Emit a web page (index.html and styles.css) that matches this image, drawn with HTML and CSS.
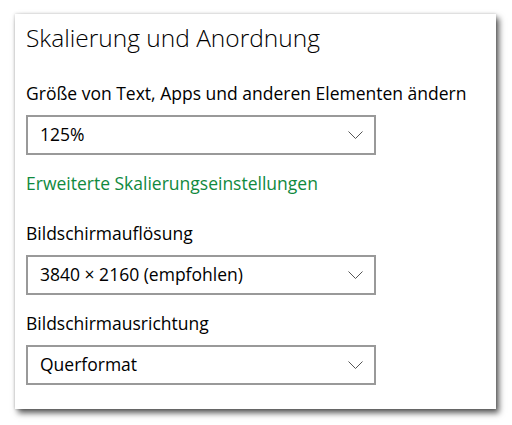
FILE: index.html
```html
<!DOCTYPE html>
<html lang="de">
<head>
<meta charset="utf-8">
<link rel="stylesheet" href="styles.css">
</head>
<body>
<div class="panel">
  <h1 class="title">Skalierung und Anordnung</h1>
  <div class="label first">Größe von Text, Apps und anderen Elementen ändern</div>
  <div class="select"><span>125%</span><svg class="chev" width="15" height="8" viewBox="0 0 15 8"><path d="M0.5 0.5 L7.5 7.5 L14.5 0.5" fill="none" stroke="#555" stroke-width="1"/></svg></div>
  <a class="link">Erweiterte Skalierungseinstellungen</a>
  <div class="label">Bildschirmauflösung</div>
  <div class="select"><span>3840 × 2160 (empfohlen)</span><svg class="chev" width="15" height="8" viewBox="0 0 15 8"><path d="M0.5 0.5 L7.5 7.5 L14.5 0.5" fill="none" stroke="#555" stroke-width="1"/></svg></div>
  <div class="label third">Bildschirmausrichtung</div>
  <div class="select"><span>Querformat</span><svg class="chev" width="15" height="8" viewBox="0 0 15 8"><path d="M0.5 0.5 L7.5 7.5 L14.5 0.5" fill="none" stroke="#555" stroke-width="1"/></svg></div>
</div>
</body>
</html>
```
FILE: styles.css
```css
html, body { margin: 0; padding: 0; background: #fff; }
body {
  font-family: "Open Sans", "Noto Sans", sans-serif;
  color: #000;
  min-height: 425px;
  padding-top: 14px;
  box-sizing: border-box;
}
.panel {
  margin: 0 0 16px 15px;
  width: 481px;
  height: 395px;
  box-sizing: border-box;
  padding: 0 0 0 11px;
  background: #fff;
  box-shadow: 3px 4px 6px rgba(0,0,0,0.65), 0 0 3px rgba(0,0,0,0.2);
  display: flex;
  flex-direction: column;
  align-items: flex-start;
}
.title {
  margin: 7px 0 0 0;
  font-weight: 300;
  font-size: 24.5px;
  line-height: 34px;
}
.label {
  font-size: 17.5px;
  line-height: 24px;
  margin-top: 26px;
}
.label.first { margin-top: 26px; }
.label.third { margin-top: 16px; }
.select {
  margin-top: 10px;
  width: 350px;
  height: 40px;
  box-sizing: border-box;
  border: 2px solid #999;
  display: flex;
  align-items: center;
  justify-content: space-between;
  padding: 0 11px 3px 12px;
  font-size: 17.5px;
}
.chev { display: block; margin-top: 3px; }
.link {
  margin-top: 16px;
  font-size: 17.5px;
  line-height: 24px;
  color: #10893e;
}
```
